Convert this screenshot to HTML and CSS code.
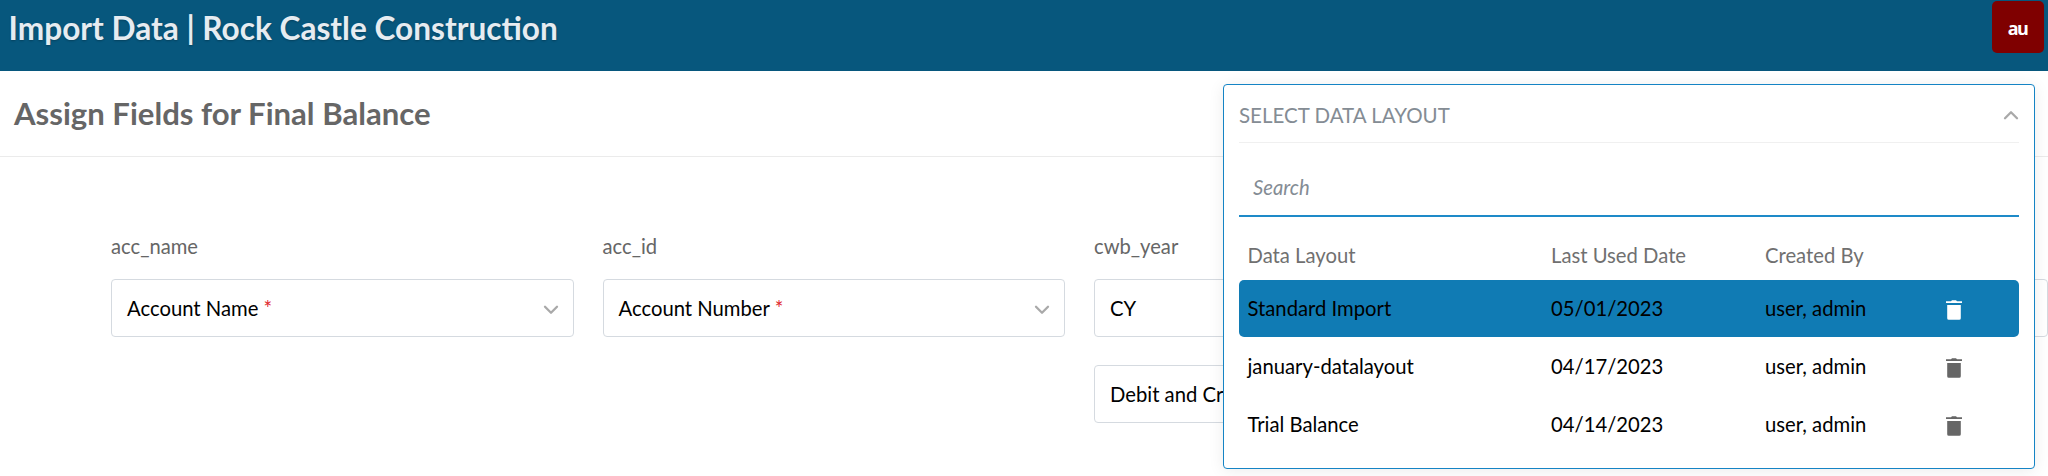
FILE: index.html
```
<!DOCTYPE html>
<html lang="en">
<head>
<meta charset="utf-8">
<title>Import Data</title>
<link rel="stylesheet" href="styles.css">
</head>
<body>
<header class="topbar">
  <h1 class="topbar-title">Import Data | Rock Castle Construction</h1>
  <div class="avatar">au</div>
</header>
<section class="subheader">
  <h2 class="subheader-title">Assign Fields for Final Balance</h2>
</section>
<main class="fields">
  <div class="field">
    <div class="field-label">acc_name</div>
    <div class="select"><span>Account Name <span class="required">*</span></span><svg class="chevron" viewBox="0 0 16 10"><path d="M2 1.7 8 7.7 14 1.7"/></svg></div>
  </div>
  <div class="field">
    <div class="field-label">acc_id</div>
    <div class="select"><span>Account Number <span class="required">*</span></span><svg class="chevron" viewBox="0 0 16 10"><path d="M2 1.7 8 7.7 14 1.7"/></svg></div>
  </div>
  <div class="field">
    <div class="field-label">cwb_year</div>
    <div class="select">CY</div>
    <div class="select">Debit and Cr</div>
  </div>
  <div class="field">
    <div class="field-label"></div>
    <div class="select"></div>
  </div>
</main>
<aside class="panel">
  <div class="panel-head">SELECT DATA LAYOUT<svg class="chevron" viewBox="0 0 16 10"><path d="M2 8.3 8 2.3 14 8.3"/></svg></div>
  <div class="search">Search</div>
  <div class="row row-head"><span>Data Layout</span><span>Last Used Date</span><span>Created By</span></div>
  <div class="row row-active"><span>Standard Import</span><span>05/01/2023</span><span>user, admin</span><svg class="trash" viewBox="0 0 16 20"><path d="M0 1.2H5L6 .2H10L11 1.2H16V3H0ZM1.2 5H14.8V18.2Q14.8 19.8 13.2 19.8H2.8Q1.2 19.8 1.2 18.2Z"/></svg></div>
  <div class="row"><span>january-datalayout</span><span>04/17/2023</span><span>user, admin</span><svg class="trash" viewBox="0 0 16 20"><path d="M0 1.2H5L6 .2H10L11 1.2H16V3H0ZM1.2 5H14.8V18.2Q14.8 19.8 13.2 19.8H2.8Q1.2 19.8 1.2 18.2Z"/></svg></div>
  <div class="row"><span>Trial Balance</span><span>04/14/2023</span><span>user, admin</span><svg class="trash" viewBox="0 0 16 20"><path d="M0 1.2H5L6 .2H10L11 1.2H16V3H0ZM1.2 5H14.8V18.2Q14.8 19.8 13.2 19.8H2.8Q1.2 19.8 1.2 18.2Z"/></svg></div>
</aside>
</body>
</html>
```
FILE: styles.css
```
* { box-sizing: border-box; }
body {
  margin: 0;
  height: 476px;
  position: relative;
  overflow: hidden;
  background: #fff;
  color: #000;
  font: 400 20.25px/24px Lato, sans-serif;
}
.topbar {
  height: 71px;
  padding: 1px 4px 0 8.6px;
  display: flex;
  justify-content: space-between;
  align-items: flex-start;
  background: #07577d;
}
.topbar-title {
  margin: 7px 0 0;
  font-size: 31.6px;
  font-weight: 700;
  line-height: 40px;
  color: #e6ecf1;
  text-shadow: 0 1px 2px rgba(0, 0, 0, .25);
  white-space: nowrap;
}
.avatar {
  width: 52px;
  height: 52px;
  border-radius: 5px;
  background: #7f0000;
  color: #fff;
  font: 700 18px/54px "Open Sans", sans-serif;
  letter-spacing: -1.5px;
  text-align: center;
  padding-right: 1px;
}
.subheader {
  height: 86px;
  padding: 0 14px 1px;
  display: flex;
  align-items: center;
  border-bottom: 1px solid #ebebeb;
}
.subheader-title {
  margin: 0;
  font-size: 31.1px;
  font-weight: 700;
  line-height: 40px;
  color: #666;
}
.fields {
  padding: 77px 1px 0 111px;
  display: grid;
  grid-template-columns: repeat(4, 462.5px);
  column-gap: 29px;
}
.field-label {
  height: 24px;
  margin-bottom: 21px;
  font-size: 20.2px;
  color: #666;
}
.select {
  height: 58px;
  margin-bottom: 28px;
  padding: 0 14px 1px 15px;
  display: flex;
  align-items: center;
  justify-content: space-between;
  border: 1.5px solid #d5dae0;
  border-radius: 4px;
  white-space: pre;
}
.required { color: #e0282e; }
.chevron {
  width: 16px;
  height: 10px;
  flex: none;
  fill: none;
  stroke: #a9a9a9;
  stroke-width: 2.3;
  stroke-linecap: round;
  stroke-linejoin: round;
}
.select .chevron { margin-top: 4px; }
.panel {
  position: absolute;
  left: 1223px;
  top: 84px;
  width: 812px;
  height: 385px;
  padding: 0 15px;
  border: 1.5px solid #1584c5;
  border-radius: 4px;
  background: #fff;
  box-shadow: 0 2px 16px rgba(0, 0, 0, .08);
}
.panel-head {
  height: 58px;
  padding-top: 2px;
  display: flex;
  align-items: center;
  justify-content: space-between;
  border-bottom: 1.5px solid #f0f0f0;
  color: #848c94;
  font-size: 20.5px;
}
.search {
  height: 74px;
  padding: 32px 14px 0;
  border-bottom: 2px solid #1e8ac8;
  color: #848c94;
  font-style: italic;
}
.row {
  height: 57.7px;
  padding-left: 8.5px;
  display: grid;
  grid-template-columns: 303.5px 214px 181px 16px;
  align-items: center;
  white-space: nowrap;
}
.row-head {
  height: 62.5px;
  padding-top: 14px;
  color: #707070;
}
.row-active {
  border-radius: 5px;
  background: #107bb4;
}
.row-active .trash { fill: #fff; }
.trash {
  width: 16px;
  height: 20px;
  margin-top: 4px;
  fill: #666;
}
```
